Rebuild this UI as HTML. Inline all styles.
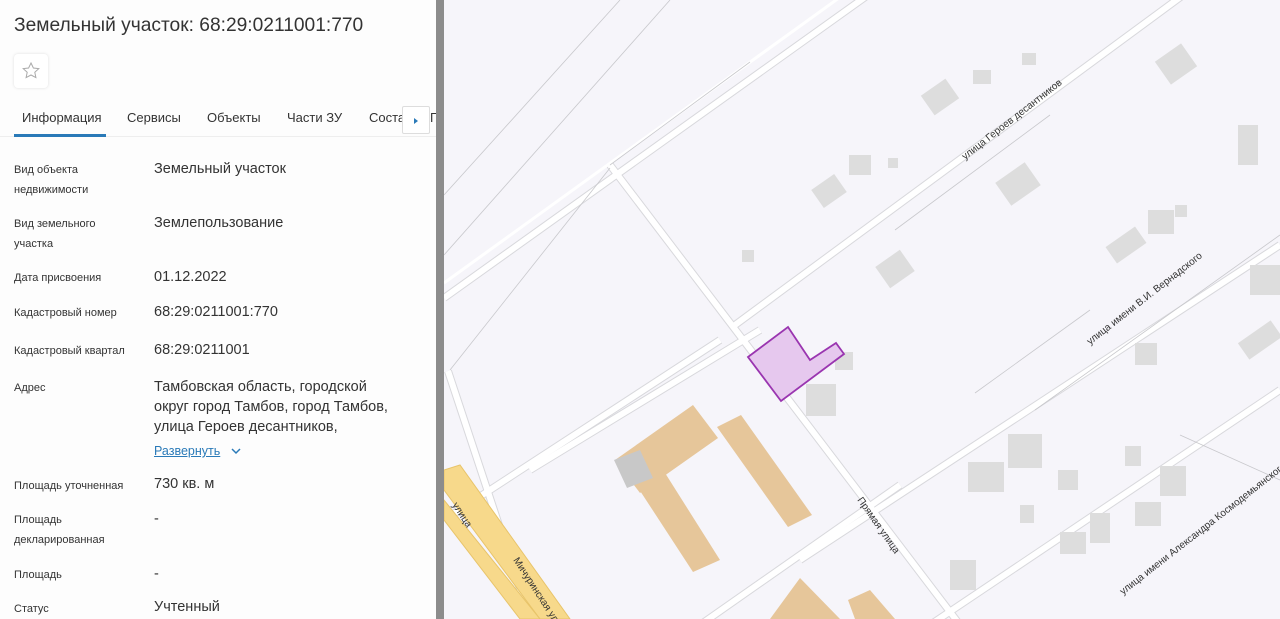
<!DOCTYPE html>
<html><head><meta charset="utf-8"><style>
body{margin:0;width:1280px;height:619px;overflow:hidden;position:relative;font-family:"Liberation Sans","Noto Sans CJK SC",sans-serif;background:#fff}
#left{position:absolute;left:0;top:0;width:436px;height:619px;background:#fdfdfd;overflow:hidden}
#bar{position:absolute;left:436px;top:0;width:8px;height:619px;background:#8c8c8c}
h1{position:absolute;left:14px;top:15px;margin:0;font-size:19.2px;font-weight:normal;color:#333}
.star{position:absolute;left:14px;top:54px;width:34px;height:34px;border-radius:4px;box-shadow:0 0 3px rgba(0,0,0,.12);background:#fff}
.tabs{position:absolute;top:110px;left:0;width:436px;font-size:13px;color:#333}
.tabs span{position:absolute;top:0}
.line{position:absolute;left:0;top:136px;width:436px;height:1px;background:#eee}
.ul{position:absolute;left:14px;top:134px;width:92px;height:3px;background:#2a7ab8}
.arr{position:absolute;left:402px;top:106px;width:26px;height:26px;background:#fff;border:1px solid #ddd;border-radius:2px}
.l{position:absolute;left:14px;font-size:11px;color:#333;line-height:20px}
.v{position:absolute;left:154px;font-size:14.5px;color:#333;line-height:20px}
</style></head><body>
<div id="left">
<h1>Земельный участок: 68:29:0211001:770</h1>
<div class="star"><svg width="34" height="34"><path d="M17 9l2.4 5 5.4.6-4 3.7 1.1 5.3L17 21l-4.9 2.6 1.1-5.3-4-3.7 5.4-.6z" fill="none" stroke="#aaa" stroke-width="1"/></svg></div>
<div class="tabs"><span style="left:22px">Информация</span><span style="left:127px">Сервисы</span><span style="left:207px">Объекты</span><span style="left:287px">Части ЗУ</span><span style="left:369px">Соста</span><span style="left:430px">Г</span></div>
<div class="line"></div><div class="ul"></div>
<div class="arr"><svg width="26" height="26"><path d="M11 11l4 3-4 3z" fill="#2a7ab8"/></svg></div>
<div class="l" style="top:160px">Вид объекта<br>недвижимости</div><div class="v" style="top:159px">Земельный участок</div>
<div class="l" style="top:214px">Вид земельного<br>участка</div><div class="v" style="top:213px">Землепользование</div>
<div class="l" style="top:268px">Дата присвоения</div><div class="v" style="top:267px">01.12.2022</div>
<div class="l" style="top:303px">Кадастровый номер</div><div class="v" style="top:302px">68:29:0211001:770</div>
<div class="l" style="top:341px">Кадастровый квартал</div><div class="v" style="top:340px">68:29:0211001</div>
<div class="l" style="top:378px">Адрес</div><div class="v" style="top:377px">Тамбовская область, городской<br>округ город Тамбов, город Тамбов,<br>улица Героев десантников,</div>
<div class="v" style="top:441px;font-size:12.5px;color:#2a7ab8;text-decoration:underline">Развернуть</div><svg style="position:absolute;left:230px;top:446px" width="12" height="10"><path d="M2 3l4 4 4-4" fill="none" stroke="#2a7ab8" stroke-width="1.5"/></svg>
<div class="l" style="top:476px">Площадь уточненная</div><div class="v" style="top:474px">730 кв. м</div>
<div class="l" style="top:510px">Площадь<br>декларированная</div><div class="v" style="top:509px">-</div>
<div class="l" style="top:565px">Площадь</div><div class="v" style="top:564px">-</div>
<div class="l" style="top:599px">Статус</div><div class="v" style="top:597px">Учтенный</div>
</div>
<div id="bar"></div>
<svg style="position:absolute;left:444px;top:0" width="836" height="619" viewBox="444 0 836 619">
<rect x="444" y="0" width="836" height="619" fill="#f6f5fa"/>
<g id="roads" fill="none">
<g stroke="#d8d8dc" stroke-width="8">
<line x1="444" y1="298" x2="875" y2="-10"/>
<line x1="735" y1="325" x2="1190" y2="-10"/>
<line x1="720" y1="340" x2="444" y2="520"/>
<line x1="610" y1="165" x2="960" y2="625"/>
<line x1="448" y1="371" x2="532" y2="625"/>
<line x1="800" y1="560" x2="1280" y2="245"/>
<line x1="700" y1="625" x2="900" y2="485"/>
<line x1="930" y1="625" x2="1280" y2="390"/>
<line x1="530" y1="470" x2="760" y2="330"/>
</g>
<g stroke="#fff" stroke-width="6">
<line x1="444" y1="298" x2="875" y2="-10"/>
<line x1="735" y1="325" x2="1190" y2="-10"/>
<line x1="720" y1="340" x2="444" y2="520"/>
<line x1="610" y1="165" x2="960" y2="625"/>
<line x1="448" y1="371" x2="532" y2="625"/>
<line x1="800" y1="560" x2="1280" y2="245"/>
<line x1="700" y1="625" x2="900" y2="485"/>
<line x1="930" y1="625" x2="1280" y2="390"/>
<line x1="530" y1="470" x2="760" y2="330"/>
</g>
<line x1="444" y1="283" x2="850" y2="-10" stroke="#fff" stroke-width="3"/>
</g>
<g stroke="#c8c8cc" fill="none" stroke-width="0.8">
<line x1="444" y1="255" x2="670" y2="0"/><line x1="444" y1="195" x2="620" y2="0"/>
<line x1="610" y1="165" x2="750" y2="62"/><line x1="450" y1="370" x2="610" y2="168"/>
<line x1="895" y1="230" x2="1050" y2="115"/><line x1="975" y1="393" x2="1090" y2="310"/>
<line x1="1035" y1="410" x2="1280" y2="235"/><line x1="1180" y1="435" x2="1280" y2="480"/>
</g>
<g fill="#f7d98b" stroke="#e8c46a" stroke-width="1"><polygon points="444,470 460,465 570,619 540,619 444,490"/><polygon points="444,500 444,520 520,619 540,619"/></g>
<g fill="#e6c69a"><polygon points="615,460 693,405 718,438 640,493"/><polygon points="633,480 660,465 720,560 693,572"/><polygon points="717,427 741,415 812,515 788,527"/><polygon points="770,619 800,578 840,619"/><polygon points="848,600 870,590 895,619 855,619"/></g>
<polygon points="614,460 640,450 653,478 627,488" fill="#c8c8c8"/>
<g fill="#ddd"><rect x="925" y="85" width="30" height="24" transform="rotate(-35 940 97)"/><rect x="973" y="70" width="18" height="14"/><rect x="1022" y="53" width="14" height="12"/><rect x="1160" y="50" width="32" height="28" transform="rotate(-35 1176 64)"/><rect x="815" y="180" width="28" height="22" transform="rotate(-35 829 191)"/><rect x="849" y="155" width="22" height="20"/><rect x="888" y="158" width="10" height="10"/><rect x="1000" y="170" width="36" height="28" transform="rotate(-35 1018 184)"/><rect x="742" y="250" width="12" height="12"/><rect x="880" y="256" width="30" height="26" transform="rotate(-35 895 269)"/><rect x="1108" y="235" width="36" height="20" transform="rotate(-35 1126 245)"/><rect x="1148" y="210" width="26" height="24"/><rect x="1175" y="205" width="12" height="12"/><rect x="1238" y="125" width="20" height="40"/><rect x="1250" y="265" width="30" height="30"/><rect x="1135" y="343" width="22" height="22"/><rect x="1240" y="330" width="40" height="20" transform="rotate(-35 1260 340)"/><rect x="835" y="352" width="18" height="18"/><rect x="806" y="384" width="30" height="32"/><rect x="968" y="462" width="36" height="30"/><rect x="1008" y="434" width="34" height="34"/><rect x="1058" y="470" width="20" height="20"/><rect x="1125" y="446" width="16" height="20"/><rect x="1160" y="466" width="26" height="30"/><rect x="1135" y="502" width="26" height="24"/><rect x="1020" y="505" width="14" height="18"/><rect x="1090" y="513" width="20" height="30"/><rect x="1060" y="532" width="26" height="22"/><rect x="950" y="560" width="26" height="30"/></g>
<polygon points="748,357 788,327 810,360 836,343 844,354 781,401" fill="#e6c8ee" stroke="#9a35b0" stroke-width="1.8"/>
<g font-family="Liberation Sans,sans-serif" font-size="10" fill="#333">
<text transform="translate(965,160) rotate(-38)">улица Героев десантников</text>
<text transform="translate(1090,345) rotate(-38)">улица имени В.И. Вернадского</text>
<text transform="translate(1123,595) rotate(-38)">улица имени Александра Космодемьянского</text>
<text transform="translate(857,500) rotate(55)">Прямая улица</text>
<text transform="translate(513,560) rotate(57)">Мичуринская улица</text>
<text transform="translate(452,505) rotate(57)">улица</text>
</g>
</svg>
</body></html>
